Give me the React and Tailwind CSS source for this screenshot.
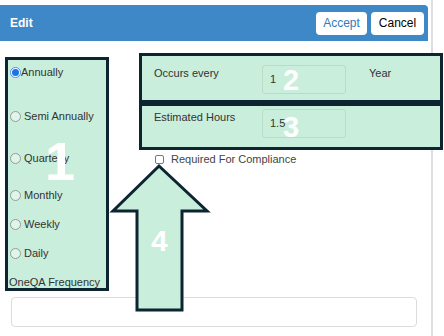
import React from 'react';

const font = { fontFamily: '"Liberation Sans", Arial, sans-serif' };

const frequencies = [
  { label: 'Annually', cls: 'mt-[5px]', checked: true },
  { label: 'Semi Annually', cls: 'mt-[30px]' },
  { label: 'Quarterly', cls: 'mt-[28px]' },
  { label: 'Monthly', cls: 'mt-[23px]' },
  { label: 'Weekly', cls: 'mt-[15px]' },
  { label: 'Daily', cls: 'mt-[15px]' },
];

const Radio = ({ checked }) =>
  checked ? (
    <span className="block shrink-0 w-[11px] h-[11px] rounded-full border border-[#4a90d9] bg-white">
      <span className="block w-[7px] h-[7px] m-[1px] rounded-full bg-[#1a73e8]" />
    </span>
  ) : (
    <span className="block shrink-0 w-[11px] h-[11px] rounded-full border border-[#999] bg-white/40" />
  );

const App = () => {
  return (
    <div className="relative w-[444px] h-[336px] bg-white overflow-hidden text-[11px] text-[#333]" style={font}>
      {/* modal edge */}
      <div className="absolute top-0 left-[431px] w-[2px] h-[336px] bg-[#dedede]" />

      {/* Header */}
      <div className="pt-[5px]">
        <div className="w-[428px] h-[36px] bg-[#3f88c8] rounded-tr-[4px] flex items-center pl-[10px] pr-[4px]">
          <span className="text-white font-bold text-[12px]">Edit</span>
          <div className="ml-auto flex gap-[4px]">
            <button className="w-[51px] h-[23px] bg-white rounded-[4px] text-[#337ab7] text-[12px]">Accept</button>
            <button className="w-[53px] h-[23px] bg-white rounded-[4px] text-black text-[12px]">Cancel</button>
          </div>
        </div>
      </div>

      {/* Body */}
      <div className="flex items-start">
        {/* Frequency list */}
        <div className="relative ml-[5px] mt-[16px] w-[104px] h-[234px] border-[3px] border-[#0c2531] bg-[#c9eedb] flex flex-col whitespace-nowrap">
          {frequencies.map((f) => (
            <div key={f.label} className={`flex items-center h-[14px] leading-[14px] ${f.cls}`}>
              <span className="ml-[2px]">
                <Radio checked={f.checked} />
              </span>
              <span className={f.checked ? '' : 'ml-[3px]'}>{f.label}</span>
            </div>
          ))}
          <div className="mt-[15px] h-[14px] leading-[14px] ml-[1px]">OneQA Frequency</div>
          <span className="absolute left-[37px] top-[74px] text-white font-bold text-[54px] leading-none">1</span>
        </div>

        {/* Right column */}
        <div className="ml-[30px] mt-[12px] flex flex-col">
          <div className="relative w-[304px] h-[50px] border-[3px] border-[#0c2531] bg-[#c9eedb] pl-[12px] pt-[9px] flex items-start">
            <span className="w-[108px] mt-[1px] leading-[14px]">Occurs every</span>
            <div className="w-[84px] h-[29px] border border-[#b9dcc6] rounded-[3px] flex items-center pl-[7px]">1</div>
            <span className="ml-[23px] mt-[1px] leading-[14px]">Year</span>
            <span className="absolute left-[141px] top-[10px] text-white font-bold text-[29px] leading-none">2</span>
          </div>
          <div className="relative w-[304px] h-[47px] border-[3px] border-[#0c2531] bg-[#c9eedb] pl-[12px] pt-[3px] flex items-start">
            <span className="w-[108px] mt-[1px] leading-[14px]">Estimated Hours</span>
            <div className="w-[84px] h-[29px] border border-[#b9dcc6] rounded-[3px] flex items-center pl-[7px]">1.5</div>
            <span className="absolute left-[141px] top-[7px] text-white font-bold text-[29px] leading-none">3</span>
          </div>
          <label className="flex items-center mt-[4px] ml-[16px] h-[10px]">
            <span className="block shrink-0 w-[9px] h-[9px] border border-[#777] rounded-[2px] bg-white" />
            <span className="ml-[7px] text-[#444] text-[11px]">Required For Compliance</span>
          </label>
        </div>
      </div>

      {/* Bottom input */}
      <div className="absolute left-[11px] top-[297px] w-[406px] h-[30px] border border-[#dcdcdc] rounded-[4px] bg-white" />

      {/* Arrow annotation */}
      <svg className="absolute left-0 top-0" width="444" height="336" viewBox="0 0 444 336">
        <polygon
          points="159,166 207,211 182,211 182,310 137,310 137,211 113,211"
          fill="#c9eedb"
          stroke="#0c2531"
          strokeWidth="3"
          strokeLinejoin="miter"
        />
      </svg>
      <span className="absolute left-[151px] top-[226px] text-white font-bold text-[30px] leading-none">4</span>
    </div>
  );
};

export default App;
